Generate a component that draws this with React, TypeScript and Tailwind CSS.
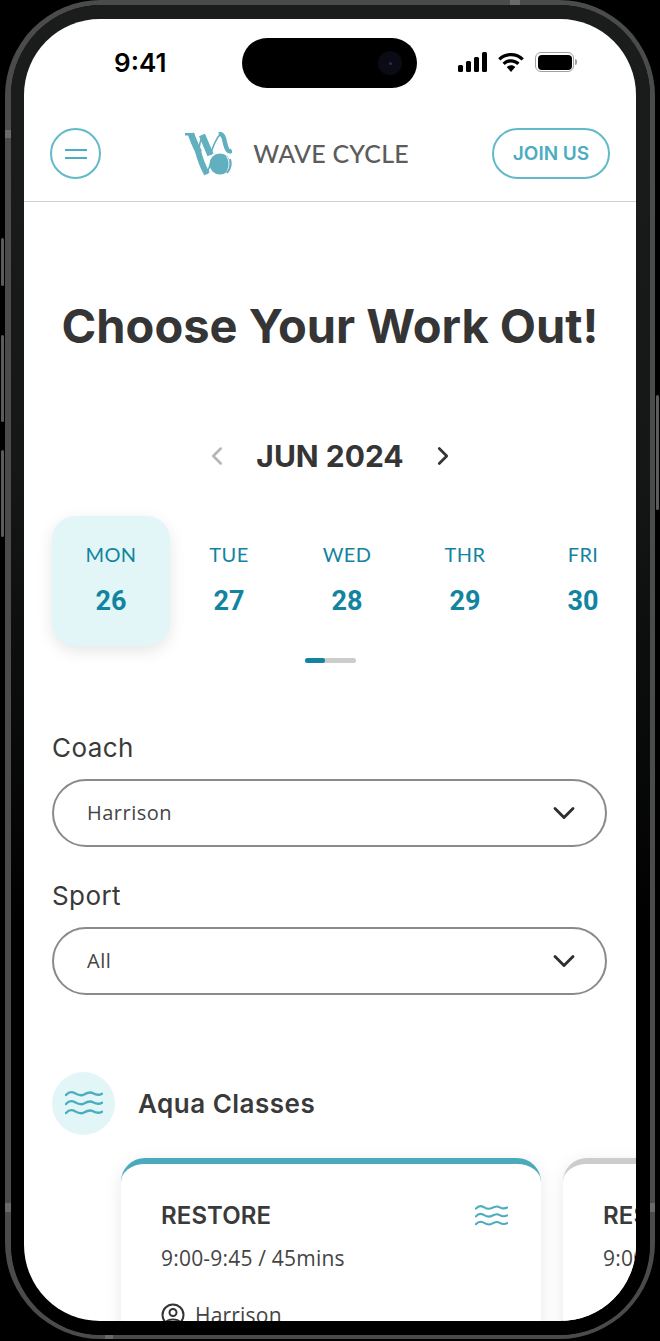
import { ChevronDown, ChevronLeft, ChevronRight } from "lucide-react";

const days = [
  { name: "MON", date: 26, active: true },
  { name: "TUE", date: 27 },
  { name: "WED", date: 28 },
  { name: "THR", date: 29 },
  { name: "FRI", date: 30 },
];

function Waves({ className }: { className?: string }) {
  return (
    <svg viewBox="0 0 38 26" fill="none" stroke="#4aadc0" strokeWidth="2.4" strokeLinecap="round" className={className}>
      <path d="M1 4.500c3-3.500 6-3.500 9-1.800s6 3 9 1.300 6-3 9-1.300 6 2.300 9 .5" />
      <path d="M1 13.500c3-3.500 6-3.500 9-1.800s6 3 9 1.300 6-3 9-1.300 6 2.300 9 .5" />
      <path d="M1 22.500c3-3.500 6-3.500 9-1.800s6 3 9 1.300 6-3 9-1.300 6 2.300 9 .5" />
    </svg>
  );
}

function Logo() {
  return (
    <svg viewBox="0 0 47 44" className="h-[44px] w-[47px]" fill="none" stroke="#62afc0">
      <path d="M0 2.200h8" strokeWidth="2.400" />
      <path d="M6 1.500c2 7 5 13 8 19" strokeWidth="6.500" />
      <path d="M13.500 20c.5-6 2-12 4-17" strokeWidth="1.600" />
      <path d="M17 3c3 7 6 14 8.500 20" strokeWidth="6.500" />
      <path d="M25.500 23c2-8 5-15 10-21.500" strokeWidth="1.600" />
      <path d="M34 2.500c3-1 4 1 5 4 1 5 2 10 4 12 1 1 2.500 1 4 0" strokeWidth="4.500" />
      <path d="M13 19c2 8 5 16 9 23" strokeWidth="6" />
      <path d="M22 42c2-7 5-14 9-19" strokeWidth="1.600" />
      <circle cx="35" cy="32" r="10.500" fill="#62afc0" stroke="none" />
      <path d="M41.500 24.500c3 3.500 3.500 10 .5 15" stroke="#ffffff" strokeWidth="1" />
      <path d="M45 27c1.500 4 1 9-3 14" stroke="#62afc0" strokeWidth="1.800" />
    </svg>
  );
}

function StatusIcons() {
  return (
    <div className="flex items-center">
      <svg width="30" height="20" viewBox="0 0 30 20" fill="#000">
        <rect x="1" y="13" width="5" height="7" rx="1.500" />
        <rect x="9" y="9" width="5" height="11" rx="1.500" />
        <rect x="17" y="5" width="5" height="15" rx="1.500" />
        <rect x="25" y="0" width="5" height="20" rx="1.500" />
      </svg>
      <svg width="28" height="19" viewBox="0 0 28 20" className="ml-[10px]" fill="#000">
        <path d="M14 0c5.200 0 10 2 13.500 5.500l-2.400 2.500C22.200 5.100 18.300 3.500 14 3.500S5.800 5.100 2.900 8L.5 5.500C4 2 8.800 0 14 0z" />
        <path d="M14 6.500c3.500 0 6.700 1.400 9 3.700l-2.500 2.500c-1.700-1.700-4-2.700-6.500-2.700s-4.800 1-6.500 2.700L5 10.200c2.300-2.300 5.500-3.700 9-3.700z" />
        <path d="M14 13c1.800 0 3.300.7 4.500 1.800L14 20l-4.500-5.200C10.700 13.700 12.200 13 14 13z" />
      </svg>
      <div className="ml-[10px] flex items-center">
        <div className="flex h-[20px] w-[39px] items-center justify-center rounded-[6px] border border-[#a0a0a0]">
          <div className="h-[15px] w-[34px] rounded-[4px] bg-black" />
        </div>
        <div className="ml-[1px] h-[6px] w-[2px] rounded-r-sm bg-[#a0a0a0]" />
      </div>
    </div>
  );
}

function Select({ label, value }: { label: string; value: string }) {
  return (
    <div>
      <div className="font-['Inter',sans-serif] text-[26px] leading-[34px] tracking-[0.4px] text-[#3a3a3a]">{label}</div>
      <div className="mt-[14px] flex h-[68px] items-center justify-between rounded-[34px] border-2 border-[#8a8a8a] pr-[23px] pl-[33px]">
        <span className="font-['Open_Sans',sans-serif] text-[20px] tracking-[0.5px] text-[#444]">{value}</span>
        <ChevronDown size={36} strokeWidth={1.9} color="#2f2f2f" />
      </div>
    </div>
  );
}

function ClassCard({ accent, waves }: { accent: string; waves?: boolean }) {
  return (
    <div
      className={`h-[220px] w-[420px] shrink-0 rounded-[24px] border-t-[6px] bg-white pt-[37px] pr-[33px] pl-[40px] shadow-[0_4px_18px_rgba(0,0,0,0.09)] ${accent}`}
    >
      <div className="flex items-center justify-between">
        <span className="font-['Inter',sans-serif] text-[24px] leading-[30px] font-semibold tracking-[0.1px] text-[#3a3a3a]">RESTORE</span>
        {waves && <Waves className="h-[24px] w-[33px]" />}
      </div>
      <div className="mt-[13px] font-['Open_Sans',sans-serif] text-[21px] leading-[28px] tracking-[0.2px] text-[#444]">
        9:00-9:45 / 45mins
      </div>
      <div className="mt-[29px] flex items-center gap-[10px] font-['Open_Sans',sans-serif] text-[21px] leading-[28px] tracking-[0.2px] text-[#444]">
        <svg width="24" height="24" viewBox="0 0 24 24" fill="none" stroke="#333" strokeWidth="2">
          <circle cx="12" cy="12" r="10.500" />
          <circle cx="12" cy="9.500" r="3.500" />
          <path d="M5 19c2-3.500 12-3.500 14 0" />
        </svg>
        Harrison
      </div>
    </div>
  );
}

export default function App() {
  return (
    <div className="relative h-[1341px] w-[660px] overflow-hidden bg-black">
      {/* side buttons */}
      <div className="absolute top-[238px] left-[1px] h-[48px] w-[3px] rounded-sm bg-[#5c5c5c]" />
      <div className="absolute top-[335px] left-[1px] h-[87px] w-[3px] rounded-sm bg-[#5c5c5c]" />
      <div className="absolute top-[450px] left-[1px] h-[87px] w-[3px] rounded-sm bg-[#5c5c5c]" />
      <div className="absolute top-[395px] right-[1px] h-[115px] w-[3px] rounded-sm bg-[#5c5c5c]" />

      {/* antenna bands on the bezel */}
      <div className="absolute top-0 left-[510px] z-10 h-[5px] w-[10px] bg-[#6a6a6a]" />
      <div className="absolute top-[130px] left-[5px] z-10 h-[8px] w-[6px] bg-[#6a6a6a]" />
      <div className="absolute top-[1203px] left-[5px] z-10 h-[9px] w-[6px] bg-[#6a6a6a]" />
      <div className="absolute top-[1203px] left-[650px] z-10 h-[9px] w-[5px] bg-[#6a6a6a]" />
      <div className="absolute top-[1335px] left-[105px] z-10 h-[4px] w-[8px] bg-[#6a6a6a]" />

      <div className="ml-[5px] h-[1339px] w-[650px] rounded-[96px] border-t-[5px] border-r-[5px] border-b-[4px] border-l-[6px] border-[#4b4b4b]">
        <div className="h-full w-full rounded-[90px] bg-[linear-gradient(180deg,#1a1d1c_0%,#141716_35%,#000000_70%)] pt-[14px] pr-[14px] pb-[14px] pl-[13px]">
          <div className="relative h-[1302px] w-[612px] overflow-hidden rounded-[76px] bg-white">
            {/* status bar */}
            <div className="flex h-[109px] items-start justify-between pt-[19px] pr-[59px] pl-[90px]">
              <span className="mt-[8px] font-['Inter',sans-serif] text-[26px] leading-[34px] font-semibold text-black">9:41</span>
              <div className="mt-[14px]">
                <StatusIcons />
              </div>
            </div>
            <div className="absolute top-[19px] left-[218px] flex h-[50px] w-[175px] items-center justify-end rounded-[25px] bg-black pr-[15px]">
              <div className="flex h-[24px] w-[24px] items-center justify-center rounded-full bg-[#0b0b16]">
                <div className="h-[3px] w-[3px] rounded-full bg-[#2a2a60]" />
              </div>
            </div>

            {/* header */}
            <header className="flex h-[74px] items-start justify-between border-b border-[#cfcfcf] px-[26px]">
              <button className="flex h-[51px] w-[51px] items-center justify-center rounded-full border-2 border-[#62b9c9]">
                <span className="flex w-[22px] flex-col gap-[6px]">
                  <span className="h-[2px] bg-[#4aadc0]" />
                  <span className="h-[2px] bg-[#4aadc0]" />
                </span>
              </button>
              <div className="mt-[4px] ml-[1px] flex items-center">
                <Logo />
                <span className="ml-[21px] font-['Lato',sans-serif] text-[25px] font-medium tracking-[0.2px] text-[#5c5c5c]">WAVE CYCLE</span>
              </div>
              <button className="h-[51px] w-[118px] rounded-full border-2 border-[#62b9c9] pt-[1px] font-['Inter',sans-serif] text-[19px] font-semibold text-[#4aadc0]">
                JOIN US
              </button>
            </header>

            {/* title */}
            <h1 className="mt-[92px] text-center font-['Inter',sans-serif] text-[47px] leading-[64px] font-bold text-[#353535]">
              Choose Your Work Out!
            </h1>

            {/* month */}
            <div className="mt-[76px] flex items-center justify-center gap-[24px]">
              <ChevronLeft size={30} strokeWidth={2} color="#b5b5b5" />
              <span className="font-['Inter',sans-serif] text-[30px] leading-[44px] font-bold text-[#353535]">JUN 2024</span>
              <ChevronRight size={30} strokeWidth={2.2} color="#353535" />
            </div>

            {/* days */}
            <div className="mt-[38px] flex pl-[28px]">
              {days.map((d) => (
                <div
                  key={d.name}
                  className={`flex h-[130px] w-[118px] shrink-0 flex-col items-center pt-[24px] text-[#11849f] ${
                    d.active ? "rounded-[24px] bg-[#e2f6f8] shadow-[0_5px_16px_rgba(0,0,0,0.1)]" : ""
                  }`}
                >
                  <span className="font-['Lato',sans-serif] text-[20px] leading-[28px] tracking-[0.4px]">{d.name}</span>
                  <span className="mt-[17px] font-['Roboto',sans-serif] text-[27px] leading-[32px] font-bold">{d.date}</span>
                </div>
              ))}
            </div>
            <div className="mt-[12px] ml-[281px] h-[5px] w-[51px] rounded-full bg-[#cccccc]">
              <div className="h-full w-[20px] rounded-full bg-[#11849f]" />
            </div>

            {/* filters */}
            <div className="mt-[68px] flex flex-col gap-[32px] pr-[29px] pl-[28px]">
              <Select label="Coach" value="Harrison" />
              <Select label="Sport" value="All" />
            </div>

            {/* aqua classes */}
            <div className="mt-[77px] flex items-center gap-[23px] pl-[28px]">
              <div className="flex h-[63px] w-[63px] items-center justify-center rounded-full bg-[#e2f6f8]">
                <Waves className="h-[27px] w-[38px]" />
              </div>
              <span className="font-['Inter',sans-serif] text-[26px] font-semibold tracking-[0.5px] text-[#3a3a3a]">Aqua Classes</span>
            </div>
            <div className="mt-[23px] flex gap-[22px] pl-[97px]">
              <ClassCard accent="border-[#4aa9bb]" waves />
              <ClassCard accent="border-[#cccccc]" />
            </div>
          </div>
        </div>
      </div>
    </div>
  );
}
